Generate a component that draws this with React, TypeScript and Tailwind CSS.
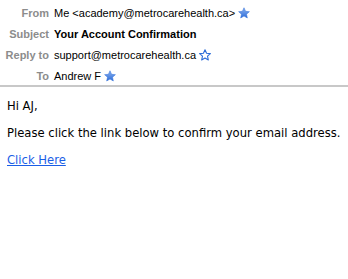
import React from 'react';

function Star({ filled }: { filled: boolean }) {
  return (
    <svg viewBox="0 0 24 24" className="ml-[3px] h-[12px] w-[12px] shrink-0 -translate-y-[1px]">
      <defs>
        <linearGradient id="starGrad" x1="0" y1="0" x2="0" y2="1">
          <stop offset="0%" stopColor="#8db3f0" />
          <stop offset="100%" stopColor="#2c6cd8" />
        </linearGradient>
      </defs>
      <path
        d="M12 1.5l3.1 7.1 7.7.7-5.8 5.1 1.7 7.6L12 18.1 5.3 22l1.7-7.6L1.2 9.3l7.7-.7z"
        fill={filled ? 'url(#starGrad)' : 'none'}
        stroke="#2c6cd8"
        strokeWidth={filled ? 1 : 2.2}
        strokeLinejoin="round"
      />
    </svg>
  );
}

const rows = [
  { label: 'From', value: 'Me <academy@metrocarehealth.ca>', star: true, bold: false },
  { label: 'Subject', value: 'Your Account Confirmation', star: null, bold: true },
  { label: 'Reply to', value: 'support@metrocarehealth.ca', star: false, bold: false },
  { label: 'To', value: 'Andrew F', star: true, bold: false },
];

export default function App() {
  return (
    <div className="h-[279px] w-[348px] overflow-hidden bg-white">
      {/* Header */}
      <div className="flex h-[85px] flex-col pt-[3px] font-['Liberation_Sans',Arial,sans-serif] text-[11px]">
        {rows.map((r) => (
          <div key={r.label} className="flex h-[21px] shrink-0 items-center whitespace-nowrap">
            <span className="w-[49px] shrink-0 text-right font-bold text-[#8c8c8c]">{r.label}</span>
            <span className={r.bold ? 'ml-[5px] font-bold text-black' : 'ml-[5px] text-black'}>{r.value}</span>
            {r.star !== null && <Star filled={r.star} />}
          </div>
        ))}
      </div>
      <div className="h-[2px] w-full bg-[#c8c8c8]" />

      {/* Body */}
      <div className="flex flex-col gap-[13px] px-[7px] pt-[12px] font-['DejaVu_Sans',Verdana,sans-serif] text-[11.6px] leading-[14px] text-black">
        <p>Hi AJ,</p>
        <p>Please click the link below to confirm your email address.</p>
        <p>
          <a href="#" className="text-[#1a5ee6] underline">Click Here</a>
        </p>
      </div>
    </div>
  );
}
